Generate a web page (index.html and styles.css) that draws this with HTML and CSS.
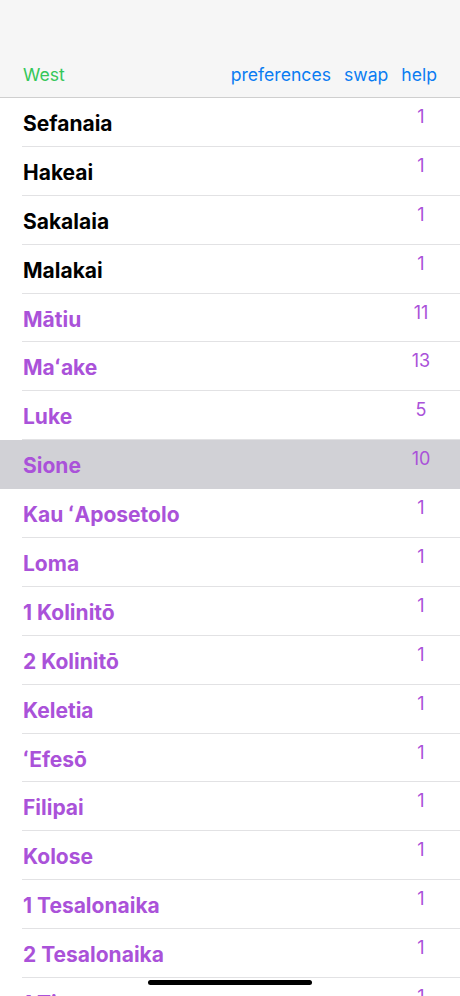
FILE: index.html
```html
<!DOCTYPE html>
<html lang="to">
<head>
  <meta charset="UTF-8" />
  <title>Tohi</title>
  <link rel="stylesheet" href="styles.css">
</head>
<body>
  <header class="topbar">
    <span class="west">West</span>
    <nav class="links">
      <span>preferences</span>
      <span>swap</span>
      <span>help</span>
    </nav>
  </header>
  <ul class="books">
    <li class="book old"><div class="row"><span class="name">Sefanaia</span><span class="count">1</span></div></li>
    <li class="book old"><div class="row"><span class="name">Hakeai</span><span class="count">1</span></div></li>
    <li class="book old"><div class="row"><span class="name">Sakalaia</span><span class="count">1</span></div></li>
    <li class="book old"><div class="row"><span class="name">Malakai</span><span class="count">1</span></div></li>
    <li class="book"><div class="row"><span class="name">Mātiu</span><span class="count">11</span></div></li>
    <li class="book"><div class="row"><span class="name">Maʻake</span><span class="count">13</span></div></li>
    <li class="book"><div class="row"><span class="name">Luke</span><span class="count">5</span></div></li>
    <li class="book selected"><div class="row"><span class="name">Sione</span><span class="count">10</span></div></li>
    <li class="book"><div class="row"><span class="name">Kau ʻAposetolo</span><span class="count">1</span></div></li>
    <li class="book"><div class="row"><span class="name">Loma</span><span class="count">1</span></div></li>
    <li class="book"><div class="row"><span class="name">1 Kolinitō</span><span class="count">1</span></div></li>
    <li class="book"><div class="row"><span class="name">2 Kolinitō</span><span class="count">1</span></div></li>
    <li class="book"><div class="row"><span class="name">Keletia</span><span class="count">1</span></div></li>
    <li class="book"><div class="row"><span class="name">ʻEfesō</span><span class="count">1</span></div></li>
    <li class="book"><div class="row"><span class="name">Filipai</span><span class="count">1</span></div></li>
    <li class="book"><div class="row"><span class="name">Kolose</span><span class="count">1</span></div></li>
    <li class="book"><div class="row"><span class="name">1 Tesalonaika</span><span class="count">1</span></div></li>
    <li class="book"><div class="row"><span class="name">2 Tesalonaika</span><span class="count">1</span></div></li>
    <li class="book"><div class="row"><span class="name">1 Timote</span><span class="count">1</span></div></li>
  </ul>
  <div class="home-bar"></div>
</body>
</html>
```

FILE: styles.css
```css
html,
body {
  margin: 0;
  height: 996px;
  overflow: hidden;
  background: #fff;
  font-family: Inter, "Noto Sans", sans-serif;
}

.topbar {
  height: 98px;
  box-sizing: border-box;
  background-color: #f6f6f6;
  border-bottom: 1px solid #cfcfcf;
  display: flex;
  align-items: flex-end;
  justify-content: space-between;
  padding: 0 23px 12px 23px;
  font-size: 17.6px;
}

.west {
  color: #34c759;
}

.links {
  display: flex;
  gap: 13px;
  color: #0a7cf2;
}

.books {
  list-style: none;
  margin: 0;
  padding: 0;
}

.book {
  padding-left: 22px;
  color: #aa52d9;
}

.book.old {
  color: #000;
}

.book.selected {
  background-color: #d1d1d6;
}

.book.selected .row {
  border-bottom-color: transparent;
}

.row {
  height: 48.9px;
  box-sizing: border-box;
  border-bottom: 1px solid #e2e2e4;
  display: flex;
  justify-content: space-between;
}

.name {
  align-self: center;
  font-size: 21px;
  font-weight: 700;
  padding-top: 3px;
  padding-left: 1px;
}

.count {
  width: 30px;
  margin-right: 24px;
  padding-top: 8px;
  text-align: center;
  font-size: 18px;
  color: #aa52d9;
}

.home-bar {
  position: absolute;
  left: 148px;
  top: 980px;
  width: 164px;
  height: 5px;
  border-radius: 3px;
  background: #000;
}
```
